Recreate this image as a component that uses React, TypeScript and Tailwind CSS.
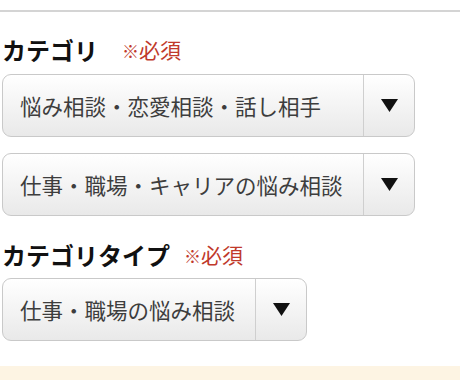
const FONT = "font-['Noto_Sans_CJK_JP','Noto_Sans',sans-serif]";

function Select({ value, width }: { value: string; width: string }) {
  return (
    <div className={`flex h-[63px] ${width} items-stretch rounded-[9px] border border-[#c9c9c9] bg-gradient-to-b from-white to-[#e9e9e9]`}>
      <div className="flex flex-1 items-center whitespace-nowrap pl-[17px] text-[21.5px] leading-none text-[#3d3d3d]">{value}</div>
      <div className="flex w-[51px] items-center justify-center border-l border-[#cfcfcf]">
        <svg width="17" height="13" viewBox="0 0 17 13">
          <path d="M0 0 H17 L8.5 13 Z" fill="#111" />
        </svg>
      </div>
    </div>
  );
}

function Label({ text, gap }: { text: string; gap: string }) {
  return (
    <div className="flex h-[31px] items-center leading-none">
      <span className="text-[24px] font-bold text-[#111]">{text}</span>
      <span className={`${gap} text-[21px] text-[#c0392b]`}>
        <span className="text-[17px]">※</span>必須
      </span>
    </div>
  );
}

export default function App() {
  return (
    <div className={`h-[380px] w-[460px] overflow-hidden bg-white ${FONT}`}>
      <div className="h-[10px]" />
      <div className="h-[2px] bg-[#d4d4d4]" />
      <div className="pl-[2px] pt-[22px]">
        <Label text="カテゴリ" gap="ml-[24px]" />
        <div className="mt-[9px] flex flex-col gap-[16px]">
          <Select value="悩み相談・恋愛相談・話し相手" width="w-[413px]" />
          <Select value="仕事・職場・キャリアの悩み相談" width="w-[413px]" />
        </div>
        <div className="mt-[23px]">
          <Label text="カテゴリタイプ" gap="ml-[14px]" />
        </div>
        <div className="mt-[8px]">
          <Select value="仕事・職場の悩み相談" width="w-[305px]" />
        </div>
      </div>
      <div className="mt-[25px] h-[20px] bg-[#fdf4e3]" />
    </div>
  );
}
